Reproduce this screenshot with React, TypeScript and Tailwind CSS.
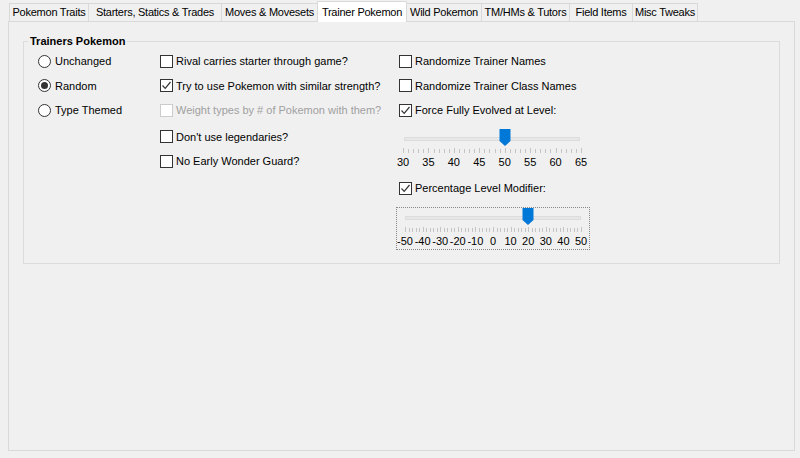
import React from "react";

const tabs = [
  { name: "Pokemon Traits", w: "w-[80px]" },
  { name: "Starters, Statics & Trades", w: "w-[133px]" },
  { name: "Moves & Movesets", w: "w-[96px]" },
  { name: "Trainer Pokemon", w: "w-[90px]" },
  { name: "Wild Pokemon", w: "w-[75px]" },
  { name: "TM/HMs & Tutors", w: "w-[88px]" },
  { name: "Field Items", w: "w-[63px]" },
  { name: "Misc Tweaks", w: "w-[65px]" },
];

const font = { fontFamily: '"Liberation Sans", Arial, sans-serif' };

const Radio = ({ label, checked }: { label: string; checked?: boolean }) => (
  <div className="flex items-center h-[24.5px] gap-[4px]">
    <span className="w-[13px] h-[13px] rounded-full border border-[#333] bg-white flex items-center justify-center">
      {checked && <span className="w-[7px] h-[7px] rounded-full bg-[#333]" />}
    </span>
    <span>{label}</span>
  </div>
);

const Check = ({
  label,
  checked,
  disabled,
  className = "",
}: {
  label: string;
  checked?: boolean;
  disabled?: boolean;
  className?: string;
}) => (
  <div className={`flex items-center h-[24.5px] gap-[3px] ${className}`}>
    <span
      className={`w-[13px] h-[13px] border bg-white flex items-center justify-center ${
        disabled ? "border-[#cccccc]" : "border-[#333]"
      }`}
    >
      {checked && (
        <svg width="11" height="11" viewBox="0 0 11 11">
          <path d="M1.5 5.5 L4.2 8.3 L9.5 2" fill="none" stroke="#333" strokeWidth="1.2" />
        </svg>
      )}
    </span>
    <span className={`whitespace-nowrap ${disabled ? "text-[#a0a0a0]" : ""}`}>{label}</span>
  </div>
);

// horizontal trackbar with ticks and value labels
const Slider = ({
  min,
  max,
  value,
  labelStep,
  tickStep,
  pad,
}: {
  min: number;
  max: number;
  value: number;
  labelStep: number;
  tickStep: number;
  pad: number;
}) => {
  const width = 192;
  const span = width - pad * 2;
  const pos = (v: number) => pad + ((v - min) / (max - min)) * span;
  const ticks: number[] = [];
  for (let v = min; v <= max; v += tickStep) ticks.push(v);
  const labels: number[] = [];
  for (let v = min; v <= max; v += labelStep) labels.push(v);
  return (
    <div className="relative w-[192px] h-[44px]">
      <div className="absolute left-[8px] right-[8px] top-[9px] h-[4px] bg-[#e7e7e7] border border-[#dcdcdc]" />
      <svg className="absolute left-0 top-0" width={width} height={30}>
        {ticks.map((t) => (
          <line
            key={t}
            x1={Math.round(pos(t)) + 0.5}
            x2={Math.round(pos(t)) + 0.5}
            y1={(t - min) % labelStep === 0 ? 20 : 21}
            y2={25}
            stroke="#c4c4c4"
          />
        ))}
        <path
          transform={`translate(${Math.round(pos(value)) - 5.5}, 1)`}
          d="M0 0 H11 V12 L5.5 17 L0 12 Z"
          fill="#0078d7"
        />
      </svg>
      {labels.map((l) => (
        <span
          key={l}
          className="absolute top-[29px] -translate-x-1/2 leading-none"
          style={{ left: pos(l) }}
        >
          {l}
        </span>
      ))}
    </div>
  );
};

export default function App() {
  return (
    <div className="w-[800px] h-[458px] bg-[#f0f0f0] text-[11px] text-black overflow-hidden" style={font}>
      <div className="flex items-end h-[21px] pl-[9px] tracking-[-0.25px]">
        {tabs.map((t, i) => {
          const sel = t.name === "Trainer Pokemon";
          return (
            <div
              key={t.name}
              className={`${t.w} border-t border-r border-[#d9d9d9] flex items-center justify-center whitespace-nowrap ${
                i === 0 ? "border-l" : ""
              } ${sel ? "bg-white h-[21px] relative z-10 -mb-px border-l -ml-px" : "bg-[#f0f0f0] h-[18px]"}`}
            >
              {t.name}
            </div>
          );
        })}
      </div>
      <div className="ml-[8px] mr-[5px] h-[430px] border border-[#d9d9d9] bg-[#f0f0f0] px-[14px] pt-[12px]">
        <fieldset className="border border-[#dcdcdc] h-[230px]">
          <legend className="font-bold px-[2px] ml-[4px] leading-[15px]">Trainers Pokemon</legend>
          <div className="flex pl-[14px]">
            <div className="w-[122px] flex flex-col">
              <Radio label="Unchanged" />
              <Radio label="Random" checked />
              <Radio label="Type Themed" />
            </div>
            <div className="w-[239px] flex flex-col">
              <Check label="Rival carries starter through game?" />
              <Check label="Try to use Pokemon with similar strength?" checked />
              <Check label="Weight types by # of Pokemon with them?" disabled />
              <Check label="Don't use legendaries?" className="mt-[2px]" />
              <Check label="No Early Wonder Guard?" />
            </div>
            <div className="flex flex-col">
              <Check label="Randomize Trainer Names" />
              <Check label="Randomize Trainer Class Names" />
              <Check label="Force Fully Evolved at Level:" checked />
              <div className="-ml-[3px] mt-[5px]">
                <Slider min={30} max={65} value={50} labelStep={5} tickStep={1} pad={7} />
              </div>
              <Check label="Percentage Level Modifier:" checked className="mt-[4.5px]" />
              <div className="-ml-[3px] mt-[6px] border border-dotted border-[#888] w-[194px] h-[43px]">
                <div className="-mt-px">
                  <Slider min={-50} max={50} value={20} labelStep={10} tickStep={2} pad={8} />
                </div>
              </div>
            </div>
          </div>
        </fieldset>
      </div>
    </div>
  );
}
